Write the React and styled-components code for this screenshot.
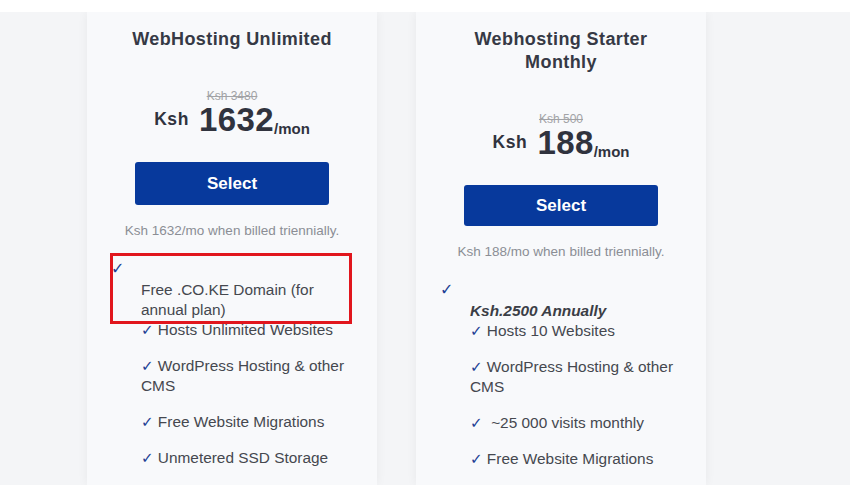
import React from 'react';
import styled, { createGlobalStyle } from 'styled-components';

const GlobalStyle = createGlobalStyle`
  html, body {
    margin: 0;
    padding: 0;
    background: #ffffff;
  }
  body {
    font-family: "Liberation Sans", Arial, "DejaVu Sans", sans-serif;
  }
`;

const Page = styled.div`
  padding-top: 12px;
  background: #ffffff;
  height: 497px;
  box-sizing: border-box;
`;

const Section = styled.section`
  height: 473px;
  background: #f4f5f7;
  overflow: hidden;
  display: flex;
  align-items: stretch;
  gap: 39px;
  padding-left: 87px;
`;

const Card = styled.div`
  width: 290px;
  box-sizing: border-box;
  padding: 16px 24px 0;
  background: #f8f9fb;
  box-shadow: 0 0 10px rgba(0, 0, 0, 0.055);
  display: flex;
  flex-direction: column;
  align-items: center;
`;

const Title = styled.h3`
  margin: 0;
  font-size: 18px;
  line-height: 23px;
  letter-spacing: 0.4px;
  font-weight: 700;
  color: #363945;
  text-align: center;
`;

const OldPrice = styled.div`
  margin-top: 39px;
  font-size: 12px;
  line-height: 12px;
  color: #a2a3a6;
  text-decoration: line-through;
`;

const PriceRow = styled.div`
  display: flex;
  align-items: flex-start;
  color: #30333e;
  font-weight: 700;
  line-height: 33px;
  height: 33px;
  margin-top: 1px;
`;

const Currency = styled.span`
  font-size: 17.5px;
  letter-spacing: 0.6px;
  line-height: 17px;
  margin-top: 8px;
  margin-right: 10px;
`;

const Amount = styled.span`
  font-size: 33px;
  letter-spacing: 0.4px;
`;

const Per = styled.span`
  font-size: 15px;
  align-self: flex-end;
  line-height: 15px;
`;

const SelectButton = styled.button`
  margin-top: 26px;
  width: 194px;
  height: 43px;
  border: none;
  border-radius: 3px;
  background: #07399c;
  color: #ffffff;
  font-family: inherit;
  font-size: 17px;
  font-weight: 700;
  cursor: pointer;
`;

const Billed = styled.div`
  margin-top: 17px;
  font-size: 13.5px;
  line-height: 18px;
  color: #8b8e95;
  text-align: center;
`;

const Features = styled.ul`
  align-self: stretch;
  list-style: none;
  margin: 18px 0 0;
  padding: 0;
  color: #45484f;
  font-size: 15.4px;
  line-height: 20px;
`;

const Feature = styled.li`
  position: relative;
  padding-left: 30px;
  margin-bottom: ${p => (p.$tight ? '0' : '16px')};
`;

const Tick = styled.span`
  color: #1d3f94;
  font-family: "DejaVu Sans", sans-serif;
  font-weight: 700;
  font-size: 15px;
  line-height: 20px;
`;

const LoneTick = styled.div`
  margin-left: -30px;
  line-height: 22px;
  color: #1d3f94;
  font-family: "DejaVu Sans", sans-serif;
  font-size: 16px;
`;

const Strong = styled.strong`
  font-style: italic;
  font-weight: 700;
  color: #3b3e46;
`;

const Highlight = styled.div`
  position: absolute;
  top: -5px;
  left: -1px;
  right: 1px;
  bottom: -4px;
  border: 3px solid #e1161d;
  pointer-events: none;
`;

const plans = [
  {
    title: 'WebHosting Unlimited',
    old: 'Ksh 3480',
    price: '1632',
    billed: 'Ksh 1632/mo when billed triennially.',
    lead: { text: 'Free .CO.KE Domain (for annual plan)', highlight: true },
    features: [
      'Hosts Unlimited Websites',
      'WordPress Hosting & other CMS',
      'Free Website Migrations',
      'Unmetered SSD Storage',
    ],
  },
  {
    title: 'Webhosting Starter Monthly',
    old: 'Ksh 500',
    price: '188',
    billed: 'Ksh 188/mo when billed triennially.',
    lead: { text: 'Ksh.2500 Annually', bold: true },
    features: [
      'Hosts 10 Websites',
      'WordPress Hosting & other CMS',
      '\u00a0~25 000 visits monthly',
      'Free Website Migrations',
    ],
  },
];

function Plan({ plan }) {
  return (
    <Card>
      <Title>{plan.title}</Title>
      <OldPrice>{plan.old}</OldPrice>
      <PriceRow>
        <Currency>Ksh</Currency>
        <Amount>{plan.price}</Amount>
        <Per>/mon</Per>
      </PriceRow>
      <SelectButton>Select</SelectButton>
      <Billed>{plan.billed}</Billed>
      <Features>
        <Feature $tight>
          <LoneTick>✓</LoneTick>
          <div>{plan.lead.bold ? <Strong>{plan.lead.text}</Strong> : plan.lead.text}</div>
          {plan.lead.highlight && <Highlight />}
        </Feature>
        {plan.features.map(f => (
          <Feature key={f}>
            <Tick>✓</Tick> {f}
          </Feature>
        ))}
      </Features>
    </Card>
  );
}

export default function App() {
  return (
    <>
      <GlobalStyle />
      <Page>
        <Section>
          {plans.map(p => (
            <Plan key={p.title} plan={p} />
          ))}
        </Section>
      </Page>
    </>
  );
}
